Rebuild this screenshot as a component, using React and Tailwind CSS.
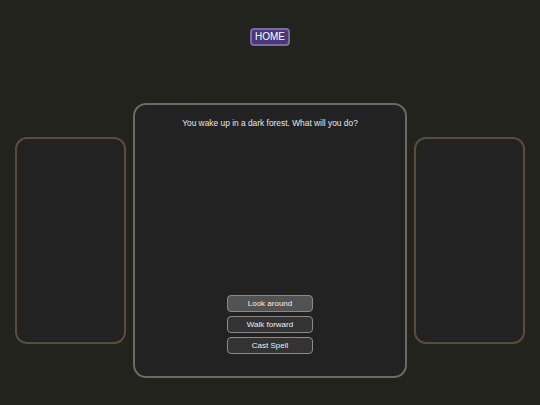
export default function App() {
  const font = { fontFamily: '"Liberation Sans", Arial, sans-serif' };
  return (
    <div className="w-full h-[405px] bg-[#23231e] flex flex-col items-center overflow-hidden" style={font}>
      <button className="mt-[28px] h-[18px] px-[3px] rounded-[4px] bg-[#4b3677] border-2 border-[#7b6aa3] text-white text-[10px] leading-none flex items-center">
        HOME
      </button>
      <div className="mt-[57px] flex items-center gap-[7px]">
        <div className="w-[111px] h-[207px] rounded-[12px] border-2 border-[#564d3e] bg-[#222222]" />
        <div className="w-[274px] h-[275px] rounded-[13px] border-2 border-[#6b6b66] bg-[#222222] flex flex-col items-center">
          <p className="mt-[14px] text-[8.4px] text-[#e8e8e8] leading-none">You wake up in a dark forest. What will you do?</p>
          <div className="mt-auto mb-[22px] flex flex-col gap-[4px]">
            <button className="w-[86px] h-[17px] rounded-[4px] border border-[#8a8a8a] bg-[#525252] text-[8px] text-[#eeeeee] leading-none">Look around</button>
            <button className="w-[86px] h-[17px] rounded-[4px] border border-[#8a8a8a] bg-[#333333] text-[8px] text-[#eeeeee] leading-none">Walk forward</button>
            <button className="w-[86px] h-[17px] rounded-[4px] border border-[#8a8a8a] bg-[#333333] text-[8px] text-[#eeeeee] leading-none">Cast Spell</button>
          </div>
        </div>
        <div className="w-[111px] h-[207px] rounded-[12px] border-2 border-[#564d3e] bg-[#222222]" />
      </div>
    </div>
  );
}
